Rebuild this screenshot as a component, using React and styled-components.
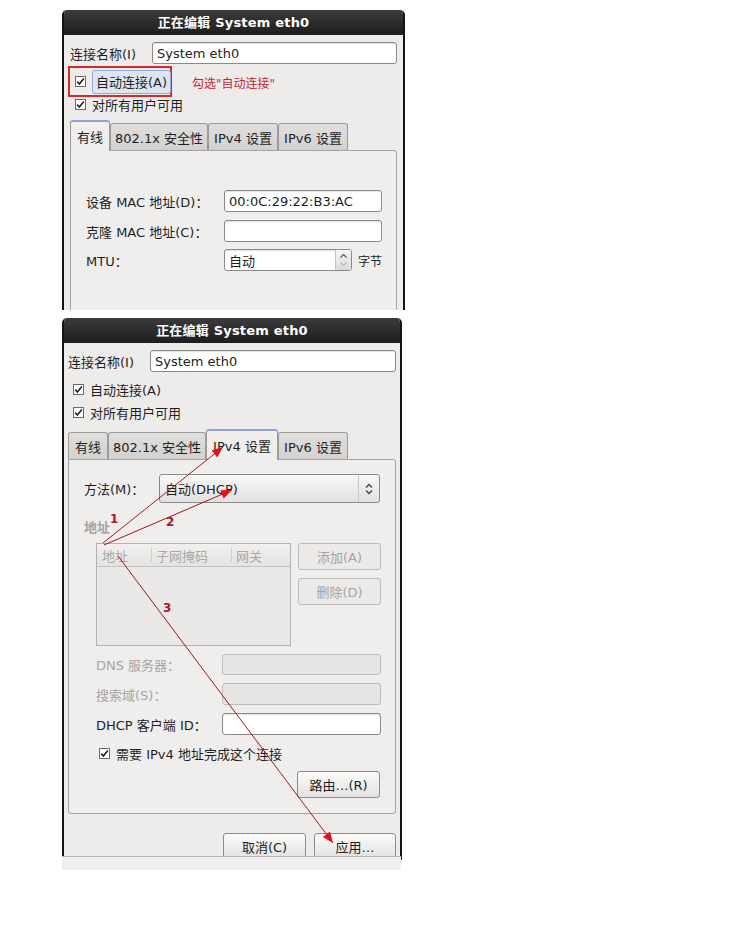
import React from 'react'
import styled, { createGlobalStyle, css } from 'styled-components'

const GlobalStyle = createGlobalStyle`
  html, body {
    margin: 0;
    padding: 0;
    background: #ffffff;
  }
  body {
    font-family: "DejaVu Sans", "Noto Sans CJK SC", sans-serif;
    font-size: 13px;
    color: #1e1e1e;
  }
`

const Page = styled.div`
  position: relative;
  width: 756px;
  height: 933px;
  box-sizing: border-box;
  padding: 10px 0 0 62px;
  display: flex;
  flex-direction: column;
  gap: 8px;
`

const Window = styled.div`
  width: ${p => p.w}px;
  height: ${p => p.h}px;
  box-sizing: border-box;
  border-left: 2px solid #141414;
  border-right: 2px solid #141414;
  border-radius: 5px 5px 0 0;
  background: #edeceb;
  overflow: hidden;
  display: flex;
  flex-direction: column;
`

const Shot = styled.div`
  display: flex;
  flex-direction: column;
`

const TitleBar = styled.div`
  height: 25px;
  flex-shrink: 0;
  background: linear-gradient(#3c3c3c, #1d1d1d);
  color: #ffffff;
  font-weight: bold;
  font-size: 13px;
  line-height: 25px;
  text-align: center;
  letter-spacing: 0.2px;
`

const Body = styled.div`
  display: flex;
  flex-direction: column;
  padding: 7px ${p => p.pr}px 0 ${p => p.pl}px;
`

const NameRow = styled.div`
  display: flex;
  align-items: center;
  height: 22px;
`

const NameLabel = styled.span`
  width: 82px;
  flex-shrink: 0;
`

const Field = styled.div`
  box-sizing: border-box;
  height: ${p => p.h || 22}px;
  width: ${p => (p.w ? `${p.w}px` : 'auto')};
  flex: ${p => (p.w ? '0 0 auto' : '1')};
  display: flex;
  align-items: center;
  padding: 0 4px;
  border: 1px solid ${p => (p.disabled ? '#bdbcba' : '#8b8a89')};
  border-radius: 3px;
  background: ${p => (p.disabled ? '#e7e6e4' : '#ffffff')};
  box-shadow: ${p => (p.disabled ? 'none' : 'inset 0 1px 1px rgba(0,0,0,0.12)')};
  color: #1e1e1e;
  white-space: nowrap;
`

const CheckRow = styled.div`
  display: flex;
  align-items: center;
  gap: 6px;
  height: ${p => p.h || 18}px;
  margin-top: ${p => p.mt || 0}px;
  padding-left: ${p => p.indent || 3}px;
  white-space: nowrap;
`

const Box = styled.span`
  width: 11px;
  height: 11px;
  flex-shrink: 0;
  box-sizing: border-box;
  border: 1px solid #6a6a6a;
  background: #ffffff;
  display: flex;
  align-items: center;
  justify-content: center;
`

const RedFrame = styled.div`
  display: flex;
  align-items: center;
  flex-shrink: 0;
  box-sizing: border-box;
  width: 104px;
  height: 31px;
  margin: 2px 0 0 -2px;
  padding-left: 5px;
  gap: 6px;
  border: 2px solid #d42a2a;
  white-space: nowrap;
`

const FocusLabel = styled.span`
  display: flex;
  align-items: center;
  flex-shrink: 0;
  height: 22px;
  padding: 0 3px;
  border: 1px solid #93abd0;
  border-radius: 3px;
  background: #dde5f0;
  white-space: nowrap;
`

const NoteRow = styled.div`
  display: flex;
  align-items: center;
  gap: 20px;
`

const Note = styled.span`
  color: #c4282a;
  font-size: 12px;
  margin-top: 4px;
  white-space: nowrap;
`

const TabStrip = styled.div`
  display: flex;
  align-items: flex-end;
  height: 30px;
  margin-top: ${p => p.mt}px;
  position: relative;
  z-index: 1;
`

const Tab = styled.div`
  box-sizing: border-box;
  width: ${p => p.w}px;
  height: ${p => (p.active ? 31 : 27)}px;
  display: flex;
  align-items: center;
  justify-content: center;
  border: 1px solid #9c9b9a;
  border-bottom: none;
  border-radius: 3px 3px 0 0;
  margin-bottom: ${p => (p.active ? -1 : 0)}px;
  white-space: nowrap;
  ${p =>
    p.active
      ? css`
          background: #efeeed;
          border-top: 2px solid #8ba5d0;
        `
      : css`
          background: linear-gradient(#e0dfdd, #d2d1cf);
        `}
`

const Panel = styled.div`
  box-sizing: border-box;
  border: 1px solid #a5a4a3;
  border-radius: 0 3px 3px 3px;
  background: #efeeed;
  display: flex;
  flex-direction: column;
  padding: ${p => p.pad};
`

const FormRow = styled.div`
  display: flex;
  align-items: center;
  height: ${p => p.h || 22}px;
  margin-top: ${p => p.mt || 0}px;
`

const Label = styled.span`
  width: ${p => p.w}px;
  flex-shrink: 0;
  color: ${p => (p.disabled ? '#a6a5a4' : '#1e1e1e')};
  white-space: nowrap;
`

const SpinWrap = styled.div`
  display: flex;
  align-items: center;
  gap: 6px;
  white-space: nowrap;
`

const SpinField = styled(Field)`
  padding: 0 0 0 4px;
  justify-content: space-between;
`

const SpinButtons = styled.span`
  width: 15px;
  height: 100%;
  display: flex;
  flex-direction: column;
  border-left: 1px solid #c6c5c4;
  background: linear-gradient(#f5f5f4, #dcdbda);
  border-radius: 0 2px 2px 0;
  align-items: center;
  justify-content: center;
`

const Unit = styled.span`
  flex-shrink: 0;
  font-size: 12px;
`

const Combo = styled.div`
  box-sizing: border-box;
  flex: 1;
  height: 29px;
  display: flex;
  align-items: center;
  padding-left: 5px;
  border: 1px solid #8b8a89;
  border-radius: 3px;
  background: linear-gradient(#f7f7f6, #e1e1e3);
  box-shadow: inset 0 1px 0 #ffffff;
`

const ComboText = styled.span`
  flex: 1;
`

const ComboArrow = styled.span`
  width: 20px;
  height: 100%;
  display: flex;
  align-items: center;
  justify-content: center;
  border-left: 1px solid #c8c7c6;
`

const SectionTitle = styled.div`
  margin-top: 17px;
  height: 16px;
  line-height: 16px;
  font-weight: bold;
  color: #a3a2a1;
`

const AddressArea = styled.div`
  display: flex;
  gap: 7px;
  margin: 7px 0 0 12px;
`

const Table = styled.div`
  box-sizing: border-box;
  width: 195px;
  height: 103px;
  border: 1px solid #b3b2b1;
  background: #e9e8e7;
`

const TableHead = styled.div`
  display: flex;
  height: 22px;
  border-bottom: 1px solid #c3c2c1;
  background: linear-gradient(#f1f0ef, #e4e3e2);
`

const HeadCell = styled.span`
  width: ${p => p.w}px;
  box-sizing: border-box;
  display: flex;
  align-items: center;
  padding-left: 5px;
  color: #a9a8a7;
  ${p => p.sep && 'border-left: 1px solid #cfcecd; margin: 4px 0; padding-left: 4px;'}
`

const SideButtons = styled.div`
  display: flex;
  flex-direction: column;
  gap: 8px;
`

const Button = styled.div`
  box-sizing: border-box;
  width: ${p => p.w || 83}px;
  height: ${p => p.h || 27}px;
  display: flex;
  align-items: center;
  justify-content: center;
  border: 1px solid ${p => (p.disabled ? '#bdbcbb' : '#8c8b8a')};
  border-radius: 3px;
  color: ${p => (p.disabled ? '#a5a4a3' : '#1e1e1e')};
  background: ${p =>
    p.disabled ? '#ebeae9' : 'linear-gradient(#fbfbfa, #e3e2e0)'};
  white-space: nowrap;
`

const DnsBlock = styled.div`
  display: flex;
  flex-direction: column;
  margin: 8px 0 0 12px;
`

const RouteRow = styled.div`
  display: flex;
  justify-content: flex-end;
  margin-top: 10px;
`

const ActionRow = styled.div`
  display: flex;
  justify-content: flex-end;
  gap: 8px;
  margin-top: 19px;
`

const Strip = styled.div`
  width: 339px;
  height: 13px;
  margin-top: -4px;
  border-top: 1px solid #b5b5b5;
  background: #efefef;
`

const Overlay = styled.svg`
  position: absolute;
  left: 0;
  top: 0;
  z-index: 10;
  pointer-events: none;
`

const CheckMark = () => (
  <svg width="9" height="9" viewBox="0 0 9 9">
    <path d="M1.2 4.6 L3.4 7 L7.8 1.6" fill="none" stroke="#222" strokeWidth="1.6" />
  </svg>
)

const Updown = ({ color = '#444' }) => (
  <svg width="8" height="14" viewBox="0 0 8 14">
    <path d="M1 5.5 L4 2.5 L7 5.5" fill="none" stroke={color} strokeWidth="1.3" />
    <path d="M1 8.5 L4 11.5 L7 8.5" fill="none" stroke={color} strokeWidth="1.3" />
  </svg>
)

const SpinArrows = () => (
  <SpinButtons>
    <svg width="9" height="18" viewBox="0 0 9 18">
      <path d="M1.5 6.5 L4.5 3.5 L7.5 6.5" fill="none" stroke="#555" strokeWidth="1.2" />
      <path d="M1.5 11.5 L4.5 14.5 L7.5 11.5" fill="none" stroke="#b8b8b8" strokeWidth="1.2" />
    </svg>
  </SpinButtons>
)

const arrows = [
  { from: [103, 543], to: [223, 447] },
  { from: [104, 545], to: [232, 490] },
  { from: [118, 556], to: [333, 843] },
]

const labels = [
  { t: '1', x: 110, y: 523 },
  { t: '2', x: 166, y: 526 },
  { t: '3', x: 163, y: 612 },
]

const head = (from, to) => {
  const dx = to[0] - from[0]
  const dy = to[1] - from[1]
  const len = Math.hypot(dx, dy)
  const ux = dx / len
  const uy = dy / len
  const bx = to[0] - ux * 11
  const by = to[1] - uy * 11
  return `${to[0]},${to[1]} ${bx - uy * 4.5},${by + ux * 4.5} ${bx + uy * 4.5},${by - ux * 4.5}`
}

const Annotations = () => (
  <Overlay width="756" height="933">
    {arrows.map((a, i) => (
      <g key={i}>
        <line x1={a.from[0]} y1={a.from[1]} x2={a.to[0]} y2={a.to[1]} stroke="#a5141f" strokeWidth="1" />
        <polygon points={head(a.from, a.to)} fill="#e1121c" />
      </g>
    ))}
    {labels.map(l => (
      <text key={l.t} x={l.x} y={l.y} fill="#b0161f" fontSize="12" fontWeight="bold" fontFamily="DejaVu Sans, sans-serif">
        {l.t}
      </text>
    ))}
  </Overlay>
)

const tabs = ['有线', '802.1x 安全性', 'IPv4 设置', 'IPv6 设置']

const Tabs = ({ active, mt, widths }) => (
  <TabStrip mt={mt}>
    {tabs.map((t, i) => (
      <Tab key={t} w={widths[i]} active={i === active}>
        {t}
      </Tab>
    ))}
  </TabStrip>
)

const App = () => {
  return (
    <>
      <GlobalStyle />
      <Page>
        {/* 上图：有线 */}
        <Window w={343} h={300}>
          <TitleBar>正在编辑 System eth0</TitleBar>
          <Body pl={6} pr={6}>
            <NameRow>
              <NameLabel>连接名称(I)</NameLabel>
              <Field>System eth0</Field>
            </NameRow>
            <NoteRow>
              <RedFrame>
                <Box><CheckMark /></Box>
                <FocusLabel>自动连接(A)</FocusLabel>
              </RedFrame>
              <Note>勾选"自动连接"</Note>
            </NoteRow>
            <CheckRow h={14} indent={5}>
              <Box><CheckMark /></Box>
              <span>对所有用户可用</span>
            </CheckRow>
            <Tabs active={0} mt={9} widths={[40, 98, 70, 70]} />
            <Panel pad="39px 15px 60px 15px">
              <FormRow>
                <Label w={138}>设备 MAC 地址(D)：</Label>
                <Field w={158}>00:0C:29:22:B3:AC</Field>
              </FormRow>
              <FormRow mt={8}>
                <Label w={138}>克隆 MAC 地址(C)：</Label>
                <Field w={158} />
              </FormRow>
              <FormRow mt={7}>
                <Label w={138}>MTU：</Label>
                <SpinWrap>
                  <SpinField w={128}>
                    自动
                    <SpinArrows />
                  </SpinField>
                  <Unit>字节</Unit>
                </SpinWrap>
              </FormRow>
            </Panel>
          </Body>
        </Window>

        {/* 下图：IPv4 设置 */}
        <Shot>
          <Window w={340} h={542}>
            <TitleBar>正在编辑 System eth0</TitleBar>
            <Body pl={4} pr={4}>
              <NameRow>
                <NameLabel>连接名称(I)</NameLabel>
                <Field>System eth0</Field>
              </NameRow>
              <CheckRow mt={8} indent={5}>
                <Box><CheckMark /></Box>
                <span>自动连接(A)</span>
              </CheckRow>
              <CheckRow mt={5} indent={5}>
                <Box><CheckMark /></Box>
                <span>对所有用户可用</span>
              </CheckRow>
              <Tabs active={2} mt={8} widths={[40, 98, 72, 70]} />
              <Panel pad="14px 15px 15px 15px">
                <FormRow h={29}>
                  <Label w={75}>方法(M)：</Label>
                  <Combo>
                    <ComboText>自动(DHCP)</ComboText>
                    <ComboArrow><Updown /></ComboArrow>
                  </Combo>
                </FormRow>
                <SectionTitle>地址</SectionTitle>
                <AddressArea>
                  <Table>
                    <TableHead>
                      <HeadCell w={54}>地址</HeadCell>
                      <HeadCell w={80} sep>子网掩码</HeadCell>
                      <HeadCell w={59} sep>网关</HeadCell>
                    </TableHead>
                  </Table>
                  <SideButtons>
                    <Button disabled>添加(A)</Button>
                    <Button disabled>删除(D)</Button>
                  </SideButtons>
                </AddressArea>
                <DnsBlock>
                  <FormRow h={21}>
                    <Label w={126} disabled>DNS 服务器：</Label>
                    <Field w={159} h={21} disabled />
                  </FormRow>
                  <FormRow mt={8}>
                    <Label w={126} disabled>搜索域(S)：</Label>
                    <Field w={159} disabled />
                  </FormRow>
                  <FormRow mt={8}>
                    <Label w={126}>DHCP 客户端 ID：</Label>
                    <Field w={159} />
                  </FormRow>
                  <CheckRow mt={10} h={16} indent={3}>
                    <Box><CheckMark /></Box>
                    <span>需要 IPv4 地址完成这个连接</span>
                  </CheckRow>
                </DnsBlock>
                <RouteRow>
                  <Button>路由…(R)</Button>
                </RouteRow>
              </Panel>
              <ActionRow>
                <Button h={26}>取消(C)</Button>
                <Button h={26} w={82}>应用…</Button>
              </ActionRow>
            </Body>
          </Window>
          <Strip />
        </Shot>
        <Annotations />
      </Page>
    </>
  )
}

export default App
